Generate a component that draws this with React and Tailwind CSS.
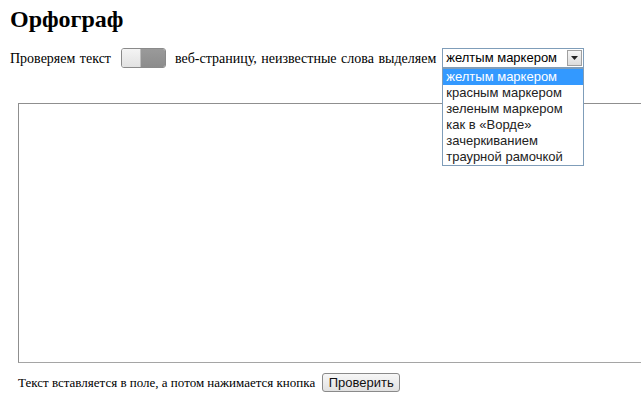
import { useState } from "react";

const options = [
  "желтым маркером",
  "красным маркером",
  "зеленым маркером",
  "как в «Ворде»",
  "зачеркиванием",
  "траурной рамочкой",
];

export default function App() {
  const [active] = useState(0);

  return (
    <div className="w-[641px] h-[407px] overflow-hidden bg-white text-black font-['Liberation_Serif',serif]">
      <h1 className="pl-[10px] pt-[6px] text-[24px] leading-[26px] font-bold">Орфограф</h1>

      <div className="flex items-center h-[20px] mt-[16px] pl-[10px] text-[14px] [word-spacing:1px]">
        <span>Проверяем текст</span>
        <div className="flex ml-[10px] w-[45px] h-[20px] rounded-[3px] border border-[#8a8a8a] overflow-hidden">
          <div className="w-[19px] bg-gradient-to-b from-[#f4f4f4] to-[#e2e2e2] border-r border-[#bdbdbd]" />
          <div className="flex-1 bg-gradient-to-b from-[#9a9a9a] to-[#8c8c8c]" />
        </div>
        <span className="ml-[9px]">веб-страницу, неизвестные слова выделяем</span>
        <div className="relative ml-[6px]">
          <div className="flex items-center w-[142px] h-[20px] border border-[#7f9db9] bg-white font-['Liberation_Sans',Arial,sans-serif] text-[13px] [word-spacing:0px]">
            <span className="flex-1 pl-[3px]">желтым маркером</span>
            <div className="w-[15px] h-[16px] mr-[1px] flex items-center justify-center border border-[#a0a0a0] bg-gradient-to-b from-[#f6f6f6] to-[#dcdcdc]">
              <svg width="7" height="4" viewBox="0 0 7 4">
                <path d="M0 0h7L3.5 4z" fill="#222" />
              </svg>
            </div>
          </div>
          <ul className="absolute left-0 top-[20px] z-10 w-[142px] border border-[#7f9db9] bg-white font-['Liberation_Sans',Arial,sans-serif] text-[13px] leading-[16px] [word-spacing:0px]">
            {options.map((o, i) => (
              <li
                key={o}
                className={`pl-[3px] h-[16px] ${i === active ? "bg-[#3399ff] text-white" : "text-[#222]"}`}
              >
                {o}
              </li>
            ))}
          </ul>
        </div>
      </div>

      <div className="ml-[18px] mt-[35px] w-[640px] h-[260px] border border-[#a5a5a5] border-t-[#8f8f8f] border-l-[#8f8f8f]" />

      <div className="flex items-center mt-[10px] pl-[18px] text-[13px]">
        <span>Текст вставляется в поле, а потом нажимается кнопка</span>
        <button className="ml-[7px] w-[78px] h-[19px] rounded-[3px] border border-[#8a8a8a] bg-gradient-to-b from-[#f7f7f7] to-[#e1e1e1] font-['Liberation_Sans',Arial,sans-serif] text-[13px] leading-[16px] text-[#111]">
          Проверить
        </button>
      </div>
    </div>
  );
}
